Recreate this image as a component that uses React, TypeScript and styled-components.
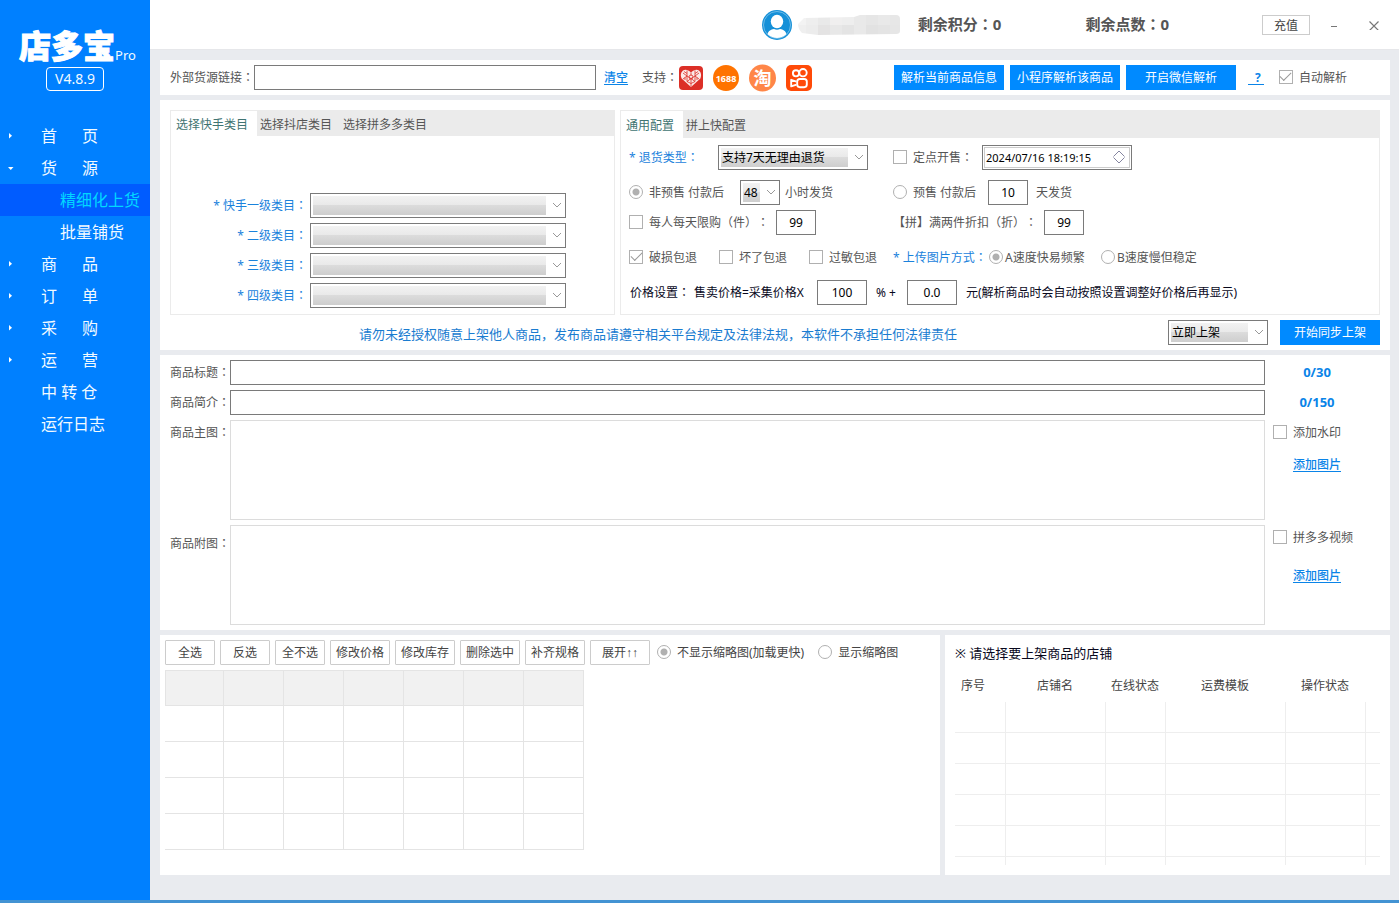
import React from "react";
import styled, { createGlobalStyle, css } from "styled-components";

const GlobalStyle = createGlobalStyle`
  * { box-sizing: border-box; }
  body {
    margin: 0;
    font-family: "Noto Sans", "Noto Sans CJK SC", sans-serif;
    font-size: 12px;
    line-height: 16px;
    text-spacing-trim: space-all;
    color: #555;
    background: #e9ebef;
  }
  button, input, select, textarea { font: inherit; margin: 0; border-radius: 0; outline: none; }
`;

const Shell = styled.div`
  display: flex;
  flex-direction: column;
  min-height: 100vh;
`;
const Body = styled.div`
  display: flex;
  flex: 1;
`;
const StatusStrip = styled.footer`
  height: 3px;
  background: #4393d3;
`;

/* ---------- sidebar ---------- */
const Sidebar = styled.aside`
  flex: 0 0 150px;
  background: #0080ff;
  color: #f2faff;
`;
const Brand = styled.div`
  display: flex;
  align-items: flex-end;
  padding: 28px 0 0 19px;
  height: 64px;
`;
const BrandName = styled.span`
  font-size: 32px;
  line-height: 36px;
  font-weight: 900;
  color: #fff;
  -webkit-text-stroke: 1px #fff;
`;
const BrandSuffix = styled.span`
  font-size: 13px;
  line-height: 18px;
`;
const Version = styled.div`
  width: 58px;
  height: 24px;
  margin: 3px 0 29px 46px;
  border: 1px solid #fff;
  border-radius: 4px;
  font-size: 14px;
  line-height: 22px;
  text-align: center;
`;
const MenuLink = styled.a<{ $sub?: boolean; $active?: boolean }>`
  display: flex;
  align-items: center;
  height: 32px;
  padding-left: ${(p) => (p.$sub ? 60 : 8)}px;
  font-size: 16px;
  line-height: 24px;
  white-space: pre;
  text-decoration: none;
  color: ${(p) => (p.$active ? "#00d8ff" : "#f2faff")};
  background: ${(p) => (p.$active ? "#005cff" : "transparent")};
`;
const ArrowSlot = styled.span`
  display: flex;
  width: 33px;
`;

/* ---------- header ---------- */
const Main = styled.div`
  flex: 1;
  min-width: 0;
`;
const Header = styled.header`
  display: flex;
  align-items: center;
  justify-content: flex-end;
  height: 50px;
  padding-right: 15px;
  background: #fff;
  border-bottom: 1px solid #e6e7ea;
`;
const UserName = styled.div`
  display: flex;
  margin: 0 18px 0 6px;
`;
const Balance = styled.div<{ $gap: number }>`
  margin-right: ${(p) => p.$gap}px;
  padding-bottom: 2px;
  font-size: 15px;
  line-height: 20px;
  font-weight: 700;
  white-space: nowrap;
`;
const RechargeButton = styled.button`
  width: 48px;
  height: 20px;
  padding: 1px 0 0;
  border: 1px solid #ccc;
  background: #fff;
  color: #444;
  line-height: 18px;
`;
const WindowButton = styled.button<{ $gap: number }>`
  display: grid;
  place-items: center;
  width: 20px;
  height: 20px;
  margin-left: ${(p) => p.$gap}px;
  padding: 0;
  border: 0;
  background: none;
`;

/* ---------- shared parts ---------- */
const Content = styled.main`
  display: flex;
  flex-direction: column;
  gap: 5px;
  padding: 10px 9px 25px 10px;
`;
const Card = styled.section`
  background: #fff;
`;
const CenteredMark = styled.span`
  font-family: "Noto Sans CJK TC", "Noto Sans CJK SC", sans-serif;
  line-height: 1;
`;
const ArrowMarks = styled.span`
  font-family: "Liberation Sans", sans-serif;
`;
const boxed = css`
  height: 25px;
  border: 1px solid #7a7a7a;
  background: #fff;
  color: #000;
`;
const TextBox = styled.input`
  ${boxed}
  padding: 0 4px;
  min-width: 0;
`;
const NumberBox = styled.input<{ $w: number }>`
  ${boxed}
  width: ${(p) => p.$w}px;
  padding: 0;
  text-align: center;
`;
const SelectWrap = styled.div<{ $w: number }>`
  position: relative;
  flex: none;
  width: ${(p) => p.$w}px;
  height: 25px;
  svg {
    position: absolute;
    right: 4px;
    top: 9px;
    pointer-events: none;
  }
`;
const SelectBox = styled.select`
  ${boxed}
  display: block;
  width: 100%;
  padding: 0 19px 0 3px;
  appearance: none;
  background: linear-gradient(#f2f2f2, #e9e9e9 48%, #dcdcdc 48%, #cecece) no-repeat 2px 2px / calc(100% - 21px) 19px #fff;
`;
const PrimaryButton = styled.button<{ $w: number }>`
  flex: none;
  width: ${(p) => p.$w}px;
  height: 25px;
  padding: 0;
  border: 0;
  background: #008aff;
  color: #fff;
`;
const Link = styled.a`
  color: #0a84e8;
  font-weight: 500;
  text-decoration: underline;
  text-underline-offset: 2px;
`;
const CheckLabel = styled.label<{ $gap?: number; $w?: number }>`
  display: flex;
  align-items: center;
  gap: ${(p) => p.$gap ?? 6}px;
  width: ${(p) => (p.$w ? p.$w + "px" : "auto")};
  white-space: nowrap;
  input { margin-bottom: 2px; }
`;
const Tick = styled.input.attrs({ type: "checkbox" })`
  appearance: none;
  display: grid;
  justify-content: center;
  align-content: center;
  flex: none;
  width: 14px;
  height: 14px;
  border: 1px solid #b0b0b0;
  background: #fff;
  &:checked::after {
    content: "";
    width: 10px;
    height: 5px;
    margin-bottom: 3px;
    border-left: 1px solid #999;
    border-bottom: 1px solid #999;
    transform: rotate(-45deg);
  }
`;
const Radio = styled.input.attrs({ type: "radio" })`
  appearance: none;
  flex: none;
  width: 14px;
  height: 14px;
  border: 1px solid #b0b0b0;
  border-radius: 50% !important;
  background: #fff;
  &:checked { background: radial-gradient(circle, #b0b0b0 3px, #fff 4px); }
`;

/* ---------- source bar ---------- */
const SourceBar = styled(Card)`
  display: flex;
  align-items: center;
  height: 35px;
  padding: 0 43px 0 10px;
  white-space: nowrap;
`;
const SourceLabel = styled.label`
  flex: 0 0 84px;
`;
const SourceInput = styled(TextBox)`
  flex: 0 1 342px;
  margin-right: 8px;
`;
const Supported = styled.div`
  display: flex;
  align-items: center;
  margin-left: 14px;
  svg { flex: none; }
`;
const SupportedLabel = styled.span`
  width: 37px;
`;
const Platforms = styled.div`
  display: flex;
  align-items: center;
  gap: 10px;
`;
const SourceActions = styled.div`
  display: flex;
  align-items: center;
  gap: 6px;
  margin-left: auto;
`;
const HelpLink = styled(Link)`
  width: 16px;
  margin: 0 9px 0 6px;
  padding-left: 4px;
  border-bottom: 1px solid #0a84e8;
  text-align: center;
  text-decoration: none;
  font-weight: 700;
  line-height: 13px;
`;

/* ---------- configuration ---------- */
const ConfigCard = styled(Card)`
  padding: 10px 10px 5px;
`;
const ConfigGrid = styled.div`
  display: grid;
  grid-template-columns: 445px minmax(0, 1fr);
  gap: 5px;
`;
const Panel = styled.div`
  border: 1px solid #ebebeb;
`;
const Tabs = styled.div<{ $h: number }>`
  display: flex;
  height: ${(p) => p.$h}px;
  background: #ebebeb;
`;
const Tab = styled.button<{ $active?: boolean }>`
  padding: ${(p) => (p.$active ? "2px 9px 0 5px" : "3px 8px 0 3px")};
  border: 0;
  background: ${(p) => (p.$active ? "#fff" : "transparent")};
  color: ${(p) => (p.$active ? "#3f7472" : "#555")};
`;
const CategoryForm = styled.div`
  display: grid;
  grid-template-columns: 136px 256px;
  gap: 5px 3px;
  align-items: center;
  padding: 57px 0 6px;
`;
const BlueLabel = styled.label`
  color: #1a82dc;
  white-space: nowrap;
`;
const CategoryLabel = styled(BlueLabel)`
  text-align: right;
`;
const Options = styled.div`
  display: flex;
  flex-direction: column;
  padding: 7px 8px 9px;
`;
const OptionRow = styled.div<{ $gap: number }>`
  display: grid;
  grid-template-columns: 264px minmax(0, 1fr);
  height: 25px;
  margin-top: ${(p) => p.$gap}px;
`;
const Cell = styled.div<{ $gap?: number }>`
  display: flex;
  align-items: center;
  gap: ${(p) => p.$gap ?? 0}px;
  white-space: nowrap;
`;
const Lead = styled.div<{ $w: number }>`
  flex: none;
  width: ${(p) => p.$w}px;
`;
const After = styled.span<{ $gap: number }>`
  margin-left: ${(p) => p.$gap}px;
`;
const PriceRow = styled.div`
  display: flex;
  align-items: center;
  gap: 9px;
  height: 25px;
  margin-top: 10px;
  padding-left: 1px;
  color: #08081c;
  white-space: nowrap;
`;
const PricePart = styled.span<{ $w: number }>`
  width: ${(p) => p.$w}px;
`;
const DateWrap = styled.div`
  position: relative;
  width: 150px;
  height: 25px;
  padding: 1px;
  border: 1px solid #7a7a7a;
  svg {
    position: absolute;
    right: 5px;
    top: 3px;
  }
`;
const DateBox = styled.input`
  display: block;
  width: 100%;
  height: 21px;
  padding: 0 24px 1px 1px;
  border: 1px solid #ccc;
  background: #fff;
  color: #000;
  font-size: 11px;
`;
const SyncRow = styled.div`
  display: flex;
  align-items: center;
  gap: 12px;
  margin-top: 5px;
`;
const Notice = styled.p`
  flex: 1;
  margin: 0;
  padding: 3px 0 0 189px;
  font-size: 13px;
  color: #1a7cd0;
`;

/* ---------- product details ---------- */
const ProductCard = styled(Card)`
  display: grid;
  grid-template-columns: 60px minmax(0, 1fr) 104px;
  row-gap: 5px;
  padding: 5px 21px 5px 10px;
`;
const FieldLabel = styled.label<{ $low?: boolean }>`
  padding-top: ${(p) => (p.$low ? 11 : 5)}px;
  white-space: nowrap;
`;
const Counter = styled.div`
  font-size: 13px;
  line-height: 25px;
  font-weight: 700;
  text-align: center;
  color: #0a84e8;
`;
const ImageArea = styled.div`
  height: 100px;
  border: 1px solid #dcdcdc;
`;
const ImageActions = styled.div<{ $gap: number }>`
  display: flex;
  flex-direction: column;
  align-items: center;
  gap: ${(p) => p.$gap}px;
  padding-top: 5px;
  label { align-self: stretch; padding-left: 8px; }
`;

/* ---------- bottom tables ---------- */
const BottomGrid = styled.div`
  display: grid;
  grid-template-columns: minmax(0, 1fr) 445px;
  gap: 5px;
`;
const SkuCard = styled(Card)`
  min-height: 240px;
  padding: 5px;
`;
const Toolbar = styled.div`
  display: flex;
  align-items: center;
  gap: 5px;
  margin-bottom: 5px;
`;
const ToolButton = styled.button<{ $wide?: boolean }>`
  flex: none;
  width: ${(p) => (p.$wide ? 60 : 50)}px;
  height: 25px;
  padding: 0;
  border: 1px solid #ccc;
  border-radius: 1px;
  background: #fff;
  color: #444;
  white-space: nowrap;
`;
const ThumbOptions = styled.div`
  display: flex;
  gap: 14px;
  margin-left: 2px;
  color: #444;
`;
const SkuTable = styled.table`
  width: 419px;
  table-layout: fixed;
  border-collapse: separate;
  border-spacing: 0;
  th, td {
    height: 36px;
    padding: 0;
    border-right: 1px solid #e4e4e4;
    border-bottom: 1px solid #e4e4e4;
  }
  th {
    background: #f1f1f1;
    border-top: 1px solid #e4e4e4;
  }
  th:first-child {
    width: 59px;
    border-left: 1px solid #e4e4e4;
  }
`;
const ShopCard = styled(Card)`
  padding: 9px 10px 10px;
`;
const ShopTitle = styled.h2`
  margin: 0;
  font-size: 13px;
  line-height: 18px;
  font-weight: 400;
  color: #08081c;
`;
const ShopTable = styled.table`
  width: 100%;
  margin-top: 8px;
  table-layout: fixed;
  border-collapse: separate;
  border-spacing: 0;
  th {
    height: 32px;
    padding: 0 2px 0 0;
    font-weight: 400;
    color: #444;
  }
  th:first-child { padding-right: 15px; }
  td {
    height: 31px;
    padding: 0;
    border-right: 1px solid #eee;
    border-bottom: 1px solid #eee;
  }
  td:last-child { border-right: 0; }
  tr:last-child td { height: 8px; border-bottom: 0; }
`;

/* ---------- drawings ---------- */
const Chevron = () => (
  <svg width="10" height="7" viewBox="0 0 10 7" fill="none" stroke="#999" aria-hidden="true">
    <path d="M1 1l4 4 4-4" />
  </svg>
);
const MenuArrow = ({ open }: { open?: boolean }) => (
  <svg width="6" height="6" viewBox="0 0 6 6" fill="#fff" aria-hidden="true">
    <path d={open ? "M0 2h5.500L2.750 5z" : "M1 0v5.500L4 2.750z"} />
  </svg>
);
const Avatar = () => (
  <svg width="30" height="30" viewBox="0 0 30 30" aria-hidden="true">
    <defs><clipPath id="face"><circle cx="15" cy="15" r="13" /></clipPath></defs>
    <circle cx="15" cy="15" r="15" fill="#1590d8" />
    <circle cx="15" cy="15" r="13.500" fill="none" stroke="#8fcbee" strokeWidth=".7" />
    <g fill="#fff" clipPath="url(#face)">
      <ellipse cx="15" cy="11.500" rx="6.200" ry="6.800" />
      <path d="M5 27c0-5 3-7.500 7-8 2 1 4 1 6 0 4 .5 7 3 7 8v3H5z" />
    </g>
  </svg>
);
const mosaicTop = ["#f3f3f3", "#eeeeee", "#e9e9e9", "#f0efef", "#eeeeee", "#e9e9e9", "#e6e6e6", "#e9e9e9", "#e7e7e7"];
const mosaicLow = ["#efefef", "#ececec", "#e4e3e3", "#e8e8e8", "#e4e4e4", "#e9e9e9", "#e2e2e2", "#e4e4e4", "#e6e6e6"];
const Mosaic = () => (
  <svg width="102" height="20" viewBox="0 0 102 20" aria-hidden="true">
    <defs><clipPath id="smear"><path d="M0 9l6-6 50-1 6-2h36q4 0 4 4v12q0 3-4 3l-78 1-16-2q-4-4-4-9z" /></clipPath></defs>
    <g clipPath="url(#smear)">
      {mosaicTop.map((c, i) => <rect key={"t" + i} x={i * 12 - 4} y="0" width="12" height="10" fill={c} />)}
      {mosaicLow.map((c, i) => <rect key={"l" + i} x={i * 12 - 4} y="10" width="12" height="10" fill={c} />)}
    </g>
  </svg>
);
const PinduoduoLogo = () => (
  <svg width="24" height="24" viewBox="0 0 24 24" aria-hidden="true">
    <rect width="24" height="24" rx="4" fill="#dc2f27" />
    <path d="M12 21L2.600 12.400C.6 8.500 2.800 3.800 6.500 3.800c2 0 3.500.8 5.500 2.600 2-1.800 3.500-2.600 5.500-2.600 3.700 0 5.900 4.700 3.900 8.600z" fill="#fbe9e7" />
    <g stroke="#dc2f27" strokeWidth=".8" fill="none">
      <path d="M4 7l4 3-4 3M20 7l-4 3 4 3M8 4.500v5.500l4 2.500 4-2.500V4.500M12 6.500v3M8 10v5.500l4-3 4 3V10M12 12.500v8M8 15.500l4 2 4-2M5 5.500l3 2M19 5.500l-3 2M6 11.500v2.500M18 11.500v2.500" />
      <circle cx="12" cy="11" r="2" />
    </g>
  </svg>
);
const AlibabaLogo = () => (
  <svg width="26" height="26" viewBox="0 0 26 26" aria-hidden="true">
    <circle cx="13" cy="13" r="13" fill="#ff7300" />
    <text x="13" y="17" textAnchor="middle" fontFamily="Noto Sans" fontSize="9" fontWeight="700" fill="#fff">1688</text>
  </svg>
);
const TaobaoLogo = () => (
  <svg width="27" height="28" viewBox="0 0 27 28" aria-hidden="true">
    <circle cx="13.500" cy="14" r="13.500" fill="#ff8648" />
    <text x="13.500" y="20.500" textAnchor="middle" fontFamily="Noto Sans CJK SC" fontSize="18" fontWeight="700" fill="#fff">淘</text>
  </svg>
);
const KuaishouLogo = () => (
  <svg width="26" height="26" viewBox="0 0 26 26" aria-hidden="true">
    <rect width="26" height="26" rx="5" fill="#ff4a08" />
    <g fill="none" stroke="#fff" strokeWidth="1.900" strokeLinejoin="round">
      <circle cx="10" cy="8.300" r="3.100" />
      <circle cx="17" cy="7.700" r="3.700" />
      <rect x="11.200" y="14" width="9.600" height="8.200" rx="2.600" />
      <path d="M10.500 16.600L5.200 14.800v6.600l5.300-1.800" />
    </g>
  </svg>
);
const Spinner = () => (
  <svg width="14" height="16" viewBox="0 0 14 16" fill="none" stroke="#668" strokeWidth=".8" aria-hidden="true">
    <path d="M1.500 7.500L7 2l5.500 5.500M1.500 8.500L7 14l5.500-5.500" />
  </svg>
);

const Colon = () => <CenteredMark>：</CenteredMark>;

interface DropDownProps { width: number; value?: string; id?: string; label?: string }
const DropDown = ({ width, value = "", id, label }: DropDownProps) => (
  <SelectWrap $w={width}>
    <SelectBox id={id} aria-label={label} defaultValue={value}>
      <option value={value}>{value}</option>
    </SelectBox>
    <Chevron />
  </SelectWrap>
);

interface MenuEntry { text: string; arrow?: "right" | "down"; sub?: boolean; active?: boolean }
const menu: MenuEntry[] = [
  { text: "首      页", arrow: "right" },
  { text: "货      源", arrow: "down" },
  { text: "精细化上货", sub: true, active: true },
  { text: "批量铺货", sub: true },
  { text: "商      品", arrow: "right" },
  { text: "订      单", arrow: "right" },
  { text: "采      购", arrow: "right" },
  { text: "运      营", arrow: "right" },
  { text: "中 转 仓" },
  { text: "运行日志" },
];
const categories = ["快手一级类目", "二级类目", "三级类目", "四级类目"];
const tools = ["全选", "反选", "全不选", "修改价格", "修改库存", "删除选中", "补齐规格"];
const shopColumns = [
  { name: "序号", width: 51 },
  { name: "店铺名", width: 100 },
  { name: "在线状态", width: 60 },
  { name: "运费模板", width: 120 },
  { name: "操作状态", width: 80 },
  { name: "" },
];
const range = (n: number) => Array.from({ length: n }, (_, i) => i);

export default function App() {
  return (
    <Shell>
      <GlobalStyle />
      <Body>
        <Sidebar>
          <Brand>
            <BrandName>店多宝</BrandName>
            <BrandSuffix>Pro</BrandSuffix>
          </Brand>
          <Version>V4.8.9</Version>
          <nav>
            {menu.map((m) => (
              <MenuLink key={m.text} href="#" $sub={m.sub} $active={m.active}>
                {!m.sub && <ArrowSlot>{m.arrow && <MenuArrow open={m.arrow === "down"} />}</ArrowSlot>}
                {m.text}
              </MenuLink>
            ))}
          </nav>
        </Sidebar>

        <Main>
          <Header>
            <Avatar />
            <UserName><Mosaic /></UserName>
            <Balance $gap={84}>剩余积分<Colon />0</Balance>
            <Balance $gap={93}>剩余点数<Colon />0</Balance>
            <RechargeButton>充值</RechargeButton>
            <WindowButton $gap={14} aria-label="最小化">
              <svg width="10" height="10" stroke="#777"><path d="M2 6.500h6" /></svg>
            </WindowButton>
            <WindowButton $gap={20} aria-label="关闭">
              <svg width="10" height="10" stroke="#777" strokeWidth="1.200"><path d="M.5 1.500l9 9M9.500 1.500l-9 9" /></svg>
            </WindowButton>
          </Header>

          <Content>
            <SourceBar>
              <SourceLabel htmlFor="source">外部货源链接<Colon /></SourceLabel>
              <SourceInput id="source" />
              <Link href="#">清空</Link>
              <Supported>
                <SupportedLabel>支持<Colon /></SupportedLabel>
                <Platforms>
                  <PinduoduoLogo />
                  <AlibabaLogo />
                  <TaobaoLogo />
                  <KuaishouLogo />
                </Platforms>
              </Supported>
              <SourceActions>
                <PrimaryButton $w={110}>解析当前商品信息</PrimaryButton>
                <PrimaryButton $w={110}>小程序解析该商品</PrimaryButton>
                <PrimaryButton $w={110}>开启微信解析</PrimaryButton>
                <HelpLink href="#">?</HelpLink>
                <CheckLabel><Tick defaultChecked />自动解析</CheckLabel>
              </SourceActions>
            </SourceBar>

            <ConfigCard>
              <ConfigGrid>
                <Panel>
                  <Tabs $h={25}>
                    <Tab $active>选择快手类目</Tab>
                    <Tab>选择抖店类目</Tab>
                    <Tab>选择拼多多类目</Tab>
                  </Tabs>
                  <CategoryForm>
                    {categories.map((c, i) => (
                      <React.Fragment key={c}>
                        <CategoryLabel htmlFor={"cat" + i}>* {c}<Colon /></CategoryLabel>
                        <DropDown id={"cat" + i} width={256} />
                      </React.Fragment>
                    ))}
                  </CategoryForm>
                </Panel>

                <Panel>
                  <Tabs $h={27}>
                    <Tab $active>通用配置</Tab>
                    <Tab>拼上快配置</Tab>
                  </Tabs>
                  <Options>
                    <OptionRow $gap={0}>
                      <Cell>
                        <Lead $w={89}><BlueLabel htmlFor="refund">* 退货类型<Colon /></BlueLabel></Lead>
                        <DropDown id="refund" width={150} value="支持7天无理由退货" />
                      </Cell>
                      <Cell>
                        <Lead $w={89}><CheckLabel><Tick /><span>定点开售<Colon /></span></CheckLabel></Lead>
                        <DateWrap>
                          <DateBox aria-label="开售时间" defaultValue="2024/07/16 18:19:15" />
                          <Spinner />
                        </DateWrap>
                      </Cell>
                    </OptionRow>
                    <OptionRow $gap={10}>
                      <Cell>
                        <Lead $w={111}><CheckLabel><Radio name="presale" defaultChecked />非预售 付款后</CheckLabel></Lead>
                        <DropDown width={40} value="48" label="发货小时" />
                        <After $gap={5}>小时发货</After>
                      </Cell>
                      <Cell>
                        <Lead $w={95}><CheckLabel><Radio name="presale" />预售 付款后</CheckLabel></Lead>
                        <NumberBox $w={40} aria-label="发货天数" defaultValue="10" />
                        <After $gap={8}>天发货</After>
                      </Cell>
                    </OptionRow>
                    <OptionRow $gap={5}>
                      <Cell $gap={7}>
                        <CheckLabel><Tick /><span>每人每天限购<CenteredMark>（</CenteredMark>件<CenteredMark>）：</CenteredMark></span></CheckLabel>
                        <NumberBox $w={40} aria-label="每天限购" defaultValue="99" />
                      </Cell>
                      <Cell $gap={7}>
                        <label htmlFor="discount">【拼】满两件折扣<CenteredMark>（</CenteredMark>折<CenteredMark>）：</CenteredMark></label>
                        <NumberBox id="discount" $w={40} defaultValue="99" />
                      </Cell>
                    </OptionRow>
                    <OptionRow $gap={10}>
                      <Cell>
                        <CheckLabel $w={90}><Tick defaultChecked />破损包退</CheckLabel>
                        <CheckLabel $w={90}><Tick />坏了包退</CheckLabel>
                        <CheckLabel><Tick />过敏包退</CheckLabel>
                      </Cell>
                      <Cell>
                        <Lead $w={96}><BlueLabel as="span">* 上传图片方式<Colon /></BlueLabel></Lead>
                        <CheckLabel $gap={2} $w={112}><Radio name="upload" defaultChecked />A速度快易频繁</CheckLabel>
                        <CheckLabel $gap={2}><Radio name="upload" />B速度慢但稳定</CheckLabel>
                      </Cell>
                    </OptionRow>
                    <PriceRow>
                      <PricePart $w={55}>价格设置<Colon /></PricePart>
                      <PricePart $w={114}>售卖价格=采集价格X</PricePart>
                      <NumberBox $w={50} aria-label="价格百分比" defaultValue="100" />
                      <PricePart $w={22}>% +</PricePart>
                      <NumberBox $w={50} aria-label="加价" defaultValue="0.0" />
                      <span>元(解析商品时会自动按照设置调整好价格后再显示)</span>
                    </PriceRow>
                  </Options>
                </Panel>
              </ConfigGrid>
              <SyncRow>
                <Notice>请勿未经授权随意上架他人商品，发布商品请遵守相关平台规定及法律法规，本软件不承担任何法律责任</Notice>
                <DropDown width={100} value="立即上架" label="上架方式" />
                <PrimaryButton $w={100}>开始同步上架</PrimaryButton>
              </SyncRow>
            </ConfigCard>

            <ProductCard>
              <FieldLabel htmlFor="title">商品标题<Colon /></FieldLabel>
              <TextBox id="title" />
              <Counter>0/30</Counter>
              <FieldLabel htmlFor="intro">商品简介<Colon /></FieldLabel>
              <TextBox id="intro" />
              <Counter>0/150</Counter>
              <FieldLabel as="span">商品主图<Colon /></FieldLabel>
              <ImageArea />
              <ImageActions $gap={16}>
                <CheckLabel><Tick />添加水印</CheckLabel>
                <Link href="#">添加图片</Link>
              </ImageActions>
              <FieldLabel as="span" $low>商品附图<Colon /></FieldLabel>
              <ImageArea />
              <ImageActions $gap={22}>
                <CheckLabel><Tick />拼多多视频</CheckLabel>
                <Link href="#">添加图片</Link>
              </ImageActions>
            </ProductCard>

            <BottomGrid>
              <SkuCard>
                <Toolbar>
                  {tools.map((t, i) => <ToolButton key={t} $wide={i > 2}>{t}</ToolButton>)}
                  <ToolButton $wide>展开<ArrowMarks>↑↑</ArrowMarks></ToolButton>
                  <ThumbOptions>
                    <CheckLabel><Radio name="thumb" defaultChecked />不显示缩略图(加载更快)</CheckLabel>
                    <CheckLabel><Radio name="thumb" />显示缩略图</CheckLabel>
                  </ThumbOptions>
                </Toolbar>
                <SkuTable>
                  <thead><tr>{range(7).map((c) => <th key={c} />)}</tr></thead>
                  <tbody>
                    {range(4).map((r) => <tr key={r}>{range(7).map((c) => <td key={c} />)}</tr>)}
                  </tbody>
                </SkuTable>
              </SkuCard>
              <ShopCard>
                <ShopTitle>※ 请选择要上架商品的店铺</ShopTitle>
                <ShopTable>
                  <colgroup>{shopColumns.map((c) => <col key={c.name} width={c.width} />)}</colgroup>
                  <thead><tr>{shopColumns.map((c) => <th key={c.name}>{c.name}</th>)}</tr></thead>
                  <tbody>
                    {range(6).map((r) => <tr key={r}>{range(6).map((c) => <td key={c} />)}</tr>)}
                  </tbody>
                </ShopTable>
              </ShopCard>
            </BottomGrid>
          </Content>
        </Main>
      </Body>
      <StatusStrip />
    </Shell>
  );
}
